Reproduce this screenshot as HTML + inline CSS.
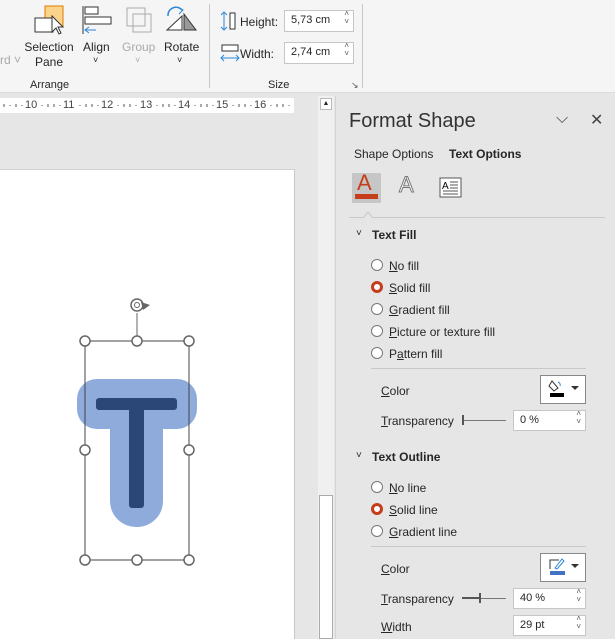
<!DOCTYPE html>
<html><head><meta charset="utf-8"><style>
*{margin:0;padding:0;box-sizing:border-box}
body{width:615px;height:639px;overflow:hidden;font-family:"Liberation Sans",sans-serif;font-size:12px;color:#262626;background:#e6e6e6;position:relative}
.a{position:absolute}
.u{text-decoration:underline}
.inp{position:absolute;background:#fff;border:1px solid #c6c6c6;font-size:11px;padding:3px 0 0 6px}
.inp:after{content:"˄\A˅";white-space:pre;position:absolute;right:4px;top:-1px;font-size:8px;line-height:8px;color:#555}
.rad{position:absolute;width:12px;height:12px;border:1px solid #777;border-radius:50%;background:#fff}
.rad.on{border:3px solid #c43e1c}
.rn{position:absolute;top:98px;font-size:11px;color:#444;line-height:15px}
</style></head><body>
<div class="a" style="left:0;top:0;width:615px;height:93px;background:#f5f5f5;border-bottom:1px solid #dcdcdc"></div>
<div class="a" style="left:0;top:53px;font-size:12px;color:#aaa">rd ˅</div>
<svg class="a" style="left:30px;top:4px" width="40" height="34"><rect x="15" y="2" width="18" height="20" fill="#fbd38a" stroke="#e07b00"/><rect x="5" y="14" width="18" height="14" fill="#fff" stroke="#333"/><path d="M22 12 L22 28 L26 24 L29 30 L31 29 L28 23 L33 23 Z" fill="#fff" stroke="#333"/></svg>
<div class="a" style="left:24px;top:40px;text-align:center;width:50px;line-height:15px">Selection<br>Pane</div>
<svg class="a" style="left:82px;top:4px" width="32" height="32"><path d="M1 2V30" stroke="#333"/><rect x="3" y="3" width="13" height="7" fill="#fff" stroke="#333"/><rect x="3" y="13" width="26" height="7" fill="#fff" stroke="#333"/><path d="M14 26H3M7 23L3 26L7 29" stroke="#2b88d8" fill="none"/></svg>
<div class="a" style="left:83px;top:40px">Align</div><div class="a" style="left:93px;top:55px;font-size:9px">˅</div>
<svg class="a" style="left:124px;top:5px" width="32" height="30"><rect x="3" y="3" width="18" height="18" fill="none" stroke="#aaa"/><rect x="9" y="9" width="18" height="18" fill="none" stroke="#aaa"/></svg>
<div class="a" style="left:122px;top:40px;color:#aaa">Group</div><div class="a" style="left:135px;top:55px;font-size:9px;color:#aaa">˅</div>
<svg class="a" style="left:164px;top:4px" width="34" height="30"><path d="M4 12a8 8 0 0 1 14-6" stroke="#2b88d8" fill="none" stroke-width="1.5"/><path d="M14 3L19 6L15 10" stroke="#2b88d8" fill="none"/><path d="M3 26L18 12V26Z" fill="#fff" stroke="#333"/><path d="M20 10L32 26H20Z" fill="#999" stroke="#333"/></svg>
<div class="a" style="left:164px;top:40px">Rotate</div><div class="a" style="left:177px;top:55px;font-size:9px">˅</div>
<div class="a" style="left:30px;top:79px;font-size:11px">Arrange</div>
<div class="a" style="left:209px;top:4px;width:1px;height:84px;background:#c8c8c8"></div>
<div class="a" style="left:362px;top:4px;width:1px;height:84px;background:#c8c8c8"></div>
<svg class="a" style="left:220px;top:11px" width="20" height="20"><path d="M4 2V18M1 4L4 1L7 4M1 16L4 19L7 16" stroke="#2b88d8" fill="none"/><rect x="10" y="2" width="5" height="16" fill="#fff" stroke="#333"/></svg>
<div class="a" style="left:240px;top:15px">Height:</div>
<div class="inp" style="left:284px;top:10px;width:70px;height:22px">5,73 cm</div>
<svg class="a" style="left:220px;top:44px" width="20" height="20"><rect x="2" y="1" width="16" height="6" fill="#fff" stroke="#333"/><path d="M1 14H19M4 11L1 14L4 17M16 11L19 14L16 17" stroke="#2b88d8" fill="none"/></svg>
<div class="a" style="left:240px;top:47px">Width:</div>
<div class="inp" style="left:284px;top:42px;width:70px;height:22px">2,74 cm</div>
<div class="a" style="left:268px;top:79px;font-size:11px">Size</div>
<div class="a" style="left:351px;top:80px;font-size:9px;color:#555">↘</div>
<div class="a" style="left:0;top:98px;width:294px;height:15px;background:#fff"></div>
<svg class="a" style="left:0;top:98px" width="294" height="15"><g stroke="#555">
<path d="M4 6v3M16 6v3M48 6v3M54 6v3M86 6v3M92 6v3M124 6v3M130 6v3M163 6v3M169 6v3M201 6v3M207 6v3M239 6v3M245 6v3M277 6v3M283 6v3M10 7v1M60 7v1M98 7v1M136 7v1M175 7v1M213 7v1M251 7v1M289 7v1M42 7v1M80 7v1M118 7v1M157 7v1M195 7v1M233 7v1M271 7v1M22 7v1"/></g></svg>
<div class="rn" style="left:25px">10</div><div class="rn" style="left:63px">11</div><div class="rn" style="left:101px">12</div><div class="rn" style="left:140px">13</div><div class="rn" style="left:178px">14</div><div class="rn" style="left:216px">15</div><div class="rn" style="left:254px">16</div>
<div class="a" style="left:0;top:169px;width:295px;height:470px;background:#fff;border-right:1px solid #c8c8c8;border-top:1px solid #d0d0d0"></div>
<div class="a" style="left:318px;top:96px;width:16px;height:543px;background:#f0f0f0"></div>
<div class="a" style="left:320px;top:98px;width:12px;height:12px;background:#fff;border:1px solid #bbb;font-size:7px;text-align:center;line-height:10px">▲</div>
<div class="a" style="left:319px;top:495px;width:14px;height:144px;background:#fff;border:1px solid #aaa"></div>
<svg class="a" style="left:0;top:0" width="300" height="639">
<rect x="77" y="379" width="120" height="50" rx="20" fill="#8eabdc"/>
<rect x="110" y="400" width="53" height="127" rx="26" fill="#8eabdc"/>
<rect x="96" y="398" width="81" height="12" rx="3" fill="#2b4778"/>
<rect x="129" y="404" width="15" height="104" rx="3" fill="#2b4778"/>
<rect x="85" y="341" width="104" height="219" fill="none" stroke="#444" stroke-width="1"/>
<path d="M137 313V341" stroke="#666"/>
<circle cx="137" cy="305" r="6" fill="none" stroke="#666" stroke-width="1.5"/><circle cx="137" cy="305" r="2.5" fill="none" stroke="#666"/><path d="M141 302L150 305L143 310Z" fill="#666"/>
<g fill="#fff" stroke="#666" stroke-width="1.5">
<circle cx="85" cy="341" r="5"/><circle cx="137" cy="341" r="5"/><circle cx="189" cy="341" r="5"/>
<circle cx="85" cy="450" r="5"/><circle cx="189" cy="450" r="5"/>
<circle cx="85" cy="560" r="5"/><circle cx="137" cy="560" r="5"/><circle cx="189" cy="560" r="5"/></g>
</svg>
<div class="a" style="left:335px;top:96px;width:280px;height:543px;background:#e6e6e6;border-left:1px solid #d4d4d4"></div>
<div class="a" style="left:349px;top:110px;font-size:20px;color:#333">Format Shape</div>
<div class="a" style="left:556px;top:110px;font-size:16px;color:#444">⌵</div>
<div class="a" style="left:590px;top:110px;font-size:16px;color:#444">✕</div>
<div class="a" style="left:354px;top:147px">Shape Options</div>
<div class="a" style="left:449px;top:147px;font-weight:bold">Text Options</div>
<div class="a" style="left:352px;top:173px;width:29px;height:30px;background:#c6c6c6"></div>
<div class="a" style="left:357px;top:170px;font-size:22px;color:#c43e1c">A</div>
<div class="a" style="left:355px;top:194px;width:23px;height:5px;background:#c43e1c"></div>
<div class="a" style="left:399px;top:172px;font-size:22px;color:#fff;-webkit-text-stroke:1px #777">A</div>
<svg class="a" style="left:439px;top:177px" width="24" height="22"><rect x="1" y="1" width="21" height="19" fill="#fff" stroke="#555"/><text x="3" y="12" font-size="10" font-family="Liberation Sans">A</text><path d="M11 5H19M11 8H19M11 11H19M4 14H19M4 17H19" stroke="#555"/></svg>
<div class="a" style="left:349px;top:217px;width:256px;height:1px;background:#c8c8c8"></div>
<svg class="a" style="left:362px;top:209px" width="14" height="10"><path d="M1 9L6 3L11 9" fill="#e6e6e6" stroke="#c8c8c8"/></svg>
<div class="a" style="left:356px;top:228px;font-size:10px">˅</div>
<div class="a" style="left:372px;top:228px;font-weight:bold">Text Fill</div>
<div class="rad" style="left:371px;top:259px"></div><div class="a" style="left:389px;top:259px"><span class="u">N</span>o fill</div>
<div class="rad on" style="left:371px;top:281px"></div><div class="a" style="left:389px;top:281px"><span class="u">S</span>olid fill</div>
<div class="rad" style="left:371px;top:303px"></div><div class="a" style="left:389px;top:303px"><span class="u">G</span>radient fill</div>
<div class="rad" style="left:371px;top:325px"></div><div class="a" style="left:389px;top:325px"><span class="u">P</span>icture or texture fill</div>
<div class="rad" style="left:371px;top:347px"></div><div class="a" style="left:389px;top:347px">P<span class="u">a</span>ttern fill</div>
<div class="a" style="left:371px;top:368px;width:215px;height:1px;background:#c8c8c8"></div>
<div class="a" style="left:381px;top:384px"><span class="u">C</span>olor</div>
<div class="a" style="left:540px;top:375px;width:46px;height:29px;background:#fff;border:1px solid #888"></div>
<svg class="a" style="left:547px;top:378px" width="36" height="22"><path d="M5 3L11 10L7 13L2 8Z" fill="#fff" stroke="#333"/><path d="M11 4a3 3 0 0 1 2 4" stroke="#2b88d8" fill="none"/><rect x="3" y="15" width="14" height="4" fill="#000"/><path d="M24 8H32L28 12Z" fill="#333"/></svg>
<div class="a" style="left:381px;top:414px"><span class="u">T</span>ransparency</div>
<div class="a" style="left:462px;top:420px;width:44px;height:1px;background:#777"></div>
<div class="a" style="left:462px;top:415px;width:2px;height:10px;background:#555"></div>
<div class="inp" style="left:513px;top:410px;width:73px;height:21px">0 %</div>
<div class="a" style="left:356px;top:450px;font-size:10px">˅</div>
<div class="a" style="left:372px;top:450px;font-weight:bold">Text Outline</div>
<div class="rad" style="left:371px;top:481px"></div><div class="a" style="left:389px;top:481px"><span class="u">N</span>o line</div>
<div class="rad on" style="left:371px;top:503px"></div><div class="a" style="left:389px;top:503px"><span class="u">S</span>olid line</div>
<div class="rad" style="left:371px;top:525px"></div><div class="a" style="left:389px;top:525px"><span class="u">G</span>radient line</div>
<div class="a" style="left:371px;top:546px;width:215px;height:1px;background:#c8c8c8"></div>
<div class="a" style="left:381px;top:562px"><span class="u">C</span>olor</div>
<div class="a" style="left:540px;top:553px;width:46px;height:29px;background:#fff;border:1px solid #888"></div>
<svg class="a" style="left:547px;top:556px" width="36" height="22"><path d="M3 13V4H12" stroke="#333" fill="none"/><path d="M8 12L15 3L17 5L10 13Z" fill="#fff" stroke="#2b88d8"/><rect x="3" y="15" width="15" height="4" fill="#4472c4"/><path d="M24 8H32L28 12Z" fill="#333"/></svg>
<div class="a" style="left:381px;top:592px"><span class="u">T</span>ransparency</div>
<div class="a" style="left:462px;top:598px;width:44px;height:1px;background:#777"></div>
<div class="a" style="left:462px;top:597px;width:17px;height:2px;background:#555"></div>
<div class="a" style="left:479px;top:593px;width:2px;height:10px;background:#555"></div>
<div class="inp" style="left:513px;top:588px;width:73px;height:21px">40 %</div>
<div class="a" style="left:381px;top:620px"><span class="u">W</span>idth</div>
<div class="inp" style="left:513px;top:615px;width:73px;height:21px">29 pt</div>
</body></html>
